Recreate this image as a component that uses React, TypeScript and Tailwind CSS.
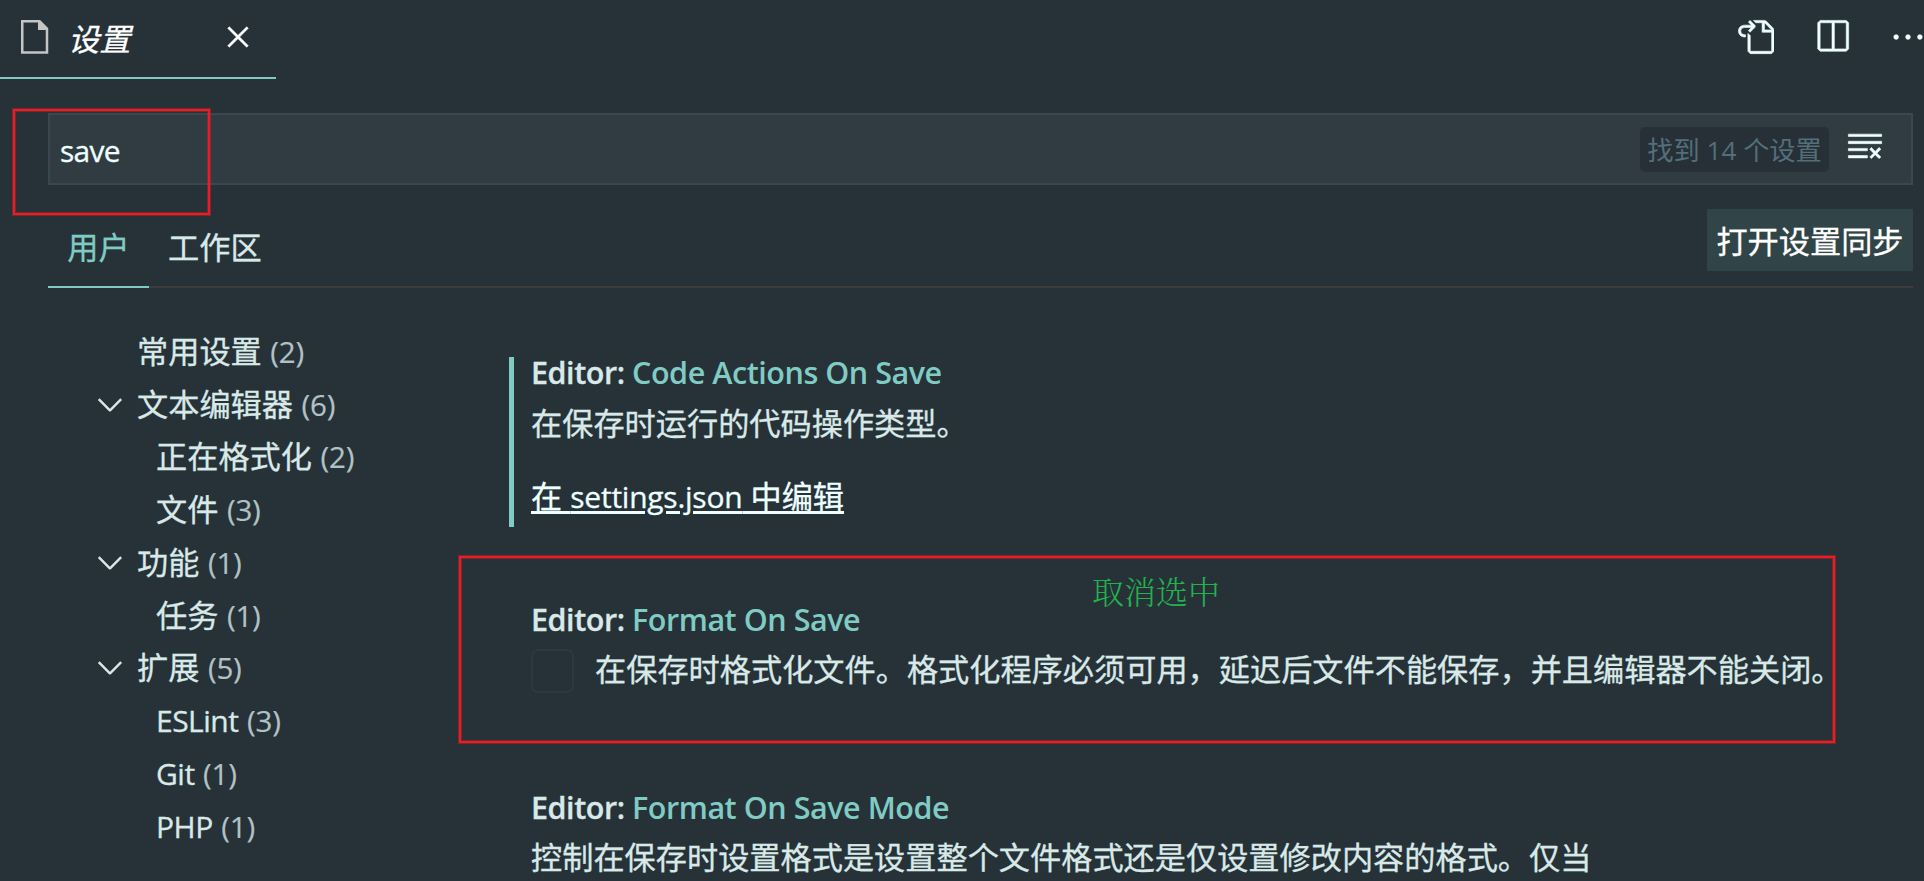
import { VscChevronDown, VscClearAll, VscClose, VscEllipsis, VscGoToFile, VscSplitHorizontal } from 'react-icons/vsc';
import type { ReactNode } from 'react';

type TocItem = { label: string; count: number; level: 1 | 2; expandable?: boolean };

const toc: TocItem[] = [
  { label: '常用设置', count: 2, level: 1 },
  { label: '文本编辑器', count: 6, level: 1, expandable: true },
  { label: '正在格式化', count: 2, level: 2 },
  { label: '文件', count: 3, level: 2 },
  { label: '功能', count: 1, level: 1, expandable: true },
  { label: '任务', count: 1, level: 2 },
  { label: '扩展', count: 5, level: 1, expandable: true },
  { label: 'ESLint', count: 3, level: 2 },
  { label: 'Git', count: 1, level: 2 },
  { label: 'PHP', count: 1, level: 2 },
];

function FileIcon() {
  return (
    <svg width="28" height="34" viewBox="0 0 28 34" fill="none">
      <path d="M1.25 1.25H18L26 9V32.5H1.25Z" stroke="#c5c5c5" strokeWidth="2.5" />
      <path d="M17 0H19L27 8V10H17Z" fill="#c5c5c5" />
    </svg>
  );
}

function TitleBar() {
  return (
    <header className="flex h-[79px] shrink-0 items-start justify-between">
      <div className="flex h-[79px] w-[276px] items-start border-b-2 border-[#80cbc4] pl-[21px] pt-5">
        <FileIcon />
        <span className="-mt-px ml-[19px] w-[142px] text-[31.2px] leading-[40px] italic text-white [-webkit-text-stroke:0.3px]">
          设置
        </span>
        <VscClose className="-mt-[2px] ml-[9px] size-[38px] text-white [stroke-width:0.2px]" />
      </div>
      <div className="flex shrink-0 pt-[18px] text-[#eeffff] [&_svg]:[stroke-width:0.25px]">
        <VscGoToFile className="mr-[39px] size-[38px]" />
        <VscSplitHorizontal className="mr-[38px] size-[38px]" />
        <VscEllipsis className="-mr-[3px] size-[38px]" />
      </div>
    </header>
  );
}

function SearchBox() {
  return (
    <div className="mt-[34px] flex h-[72px] shrink-0 items-center justify-between border-2 border-[#3b474d] bg-[#313b42] pl-[10px] pr-[27px]">
      <span className="pt-[2px] text-[30px] tracking-[-0.7px] text-[#eeffff] [-webkit-text-stroke:0.3px]">save</span>
      <div className="flex items-center">
        <span className="flex h-[45px] w-[189px] items-center justify-center whitespace-nowrap rounded-[5px] bg-[#263036] pt-[3px] text-[26.2px] text-[#546e7a]">
          找到 14 个设置
        </span>
        <VscClearAll className="-mt-[7px] ml-[17px] size-[38px] text-[#eeffff] [stroke-width:0.25px]" />
      </div>
    </div>
  );
}

function ScopeTabs() {
  return (
    <div className="flex h-[103px] shrink-0 items-end justify-between border-b-2 border-[#3f3c3e] text-[31.2px] [-webkit-text-stroke:0.3px]">
      <div className="-mb-[2px] flex leading-[39px]">
        <span className="h-[60px] w-[101px] border-b-2 border-[#80cbc4] text-center text-[#80cbc4]">用户</span>
        <span className="h-[60px] pl-[19px] text-[#d9e9e8]">工作区</span>
      </div>
      <button className="mb-[15px] h-[62px] w-[206px] whitespace-nowrap bg-[#314549] pt-[2px] text-white [-webkit-text-stroke:0.3px]">
        打开设置同步
      </button>
    </div>
  );
}

function Toc() {
  return (
    <nav className="w-[461px] shrink-0 pl-[43px] pt-[37px]">
      {toc.map((item) => (
        <div key={item.label} className="flex h-[52.75px] items-center text-[#d9e9e8]">
          <span className="flex w-[46px] shrink-0 justify-start">
            {item.expandable && <VscChevronDown className="-mt-px size-[38px] [stroke-width:0.2px]" />}
          </span>
          <span className={item.level === 2 ? 'pl-[19px] text-[30px]' : 'text-[30px]'}>
            <span
              className={
                /^[A-Z]/.test(item.label)
                  ? 'tracking-[-0.5px] [-webkit-text-stroke:0.3px]'
                  : 'text-[31.2px] [-webkit-text-stroke:0.3px]'
              }
            >
              {item.label}
            </span>
            <span className="ml-[8.5px] text-[29.5px] tracking-[-0.2px] text-[#b2c2c4] [-webkit-text-stroke:0.2px]">
              ({item.count})
            </span>
          </span>
        </div>
      ))}
    </nav>
  );
}

function SettingTitle({ name }: { name: string }) {
  return (
    <h2 className="-mt-[6px] mb-[9px] h-[42px] whitespace-nowrap text-[30.5px] font-semibold leading-[42px] tracking-[-0.45px] text-[#d9e9e8]">
      <span className="[-webkit-text-stroke:0.3px]">Editor:</span> <span className="text-[#80cbc4]">{name}</span>
    </h2>
  );
}

function Setting({ name, className, children }: { name: string; className: string; children: ReactNode }) {
  return (
    <section className={className}>
      <SettingTitle name={name} />
      {children}
    </section>
  );
}

export default function App() {
  return (
    <div className="relative flex h-[881px] w-[1924px] flex-col overflow-hidden bg-[#263238] font-['Open_Sans','Noto_Sans_CJK_SC',sans-serif]">
      <TitleBar />
      <main className="ml-[48px] mr-[11px] flex min-h-0 flex-1 flex-col">
        <SearchBox />
        <ScopeTabs />
        <div className="flex min-h-0 flex-1">
          <Toc />
          <div className="flex flex-col pt-[69px] text-[31.2px] text-[#d9e9e8]">
            <Setting name="Code Actions On Save" className="flow-root h-[170px] border-l-[5px] border-[#80cbc4] pl-[17px]">
              <p className="h-[42px] whitespace-nowrap leading-[42px] [-webkit-text-stroke:0.3px]">
                在保存时运行的代码操作类型。
              </p>
              <a className="mt-[31px] block h-[42px] whitespace-nowrap leading-[42px] text-[#eeffff] underline decoration-[3px] underline-offset-[3px] [-webkit-text-stroke:0.3px]">
                在 <span className="text-[30px] tracking-[-0.25px]">settings.json</span> 中编辑
              </a>
            </Setting>
            <Setting name="Format On Save" className="mt-[77px] flow-root pl-[22px]">
              <div className="flex h-[44px] items-center whitespace-nowrap [-webkit-text-stroke:0.3px]">
                <span className="mr-[21px] h-[44px] w-[43px] shrink-0 rounded-[7px] border-2 border-[#2e383e]" />
                <span className="-mt-[3px]">
                  在保存时格式化文件。格式化程序必须可用，延迟后文件不能保存，并且编辑器不能关闭。
                </span>
              </div>
            </Setting>
            <Setting name="Format On Save Mode" className="mt-[99px] flow-root pl-[22px]">
              <p className="-mt-px h-[42px] whitespace-nowrap leading-[42px] [-webkit-text-stroke:0.3px]">
                控制在保存时设置格式是设置整个文件格式还是仅设置修改内容的格式。仅当
              </p>
            </Setting>
          </div>
        </div>
      </main>
      <div className="absolute left-[13px] top-[109px] h-[106px] w-[197px] border-2 border-[#ed1c24] shadow-[0_0_0_1px_#ed1c2466,inset_0_0_0_1px_#ed1c2466]" />
      <div className="absolute left-[459px] top-[556px] h-[187px] w-[1376px] border-2 border-[#ed1c24] shadow-[0_0_0_1px_#ed1c2466,inset_0_0_0_1px_#ed1c2466]" />
      <span className="absolute left-[1092px] top-[566px] font-['Noto_Serif_CJK_SC','Noto_Sans_CJK_SC',serif] text-[32px] font-light leading-[48px] text-[#22b14c]">
        取消选中
      </span>
    </div>
  );
}
